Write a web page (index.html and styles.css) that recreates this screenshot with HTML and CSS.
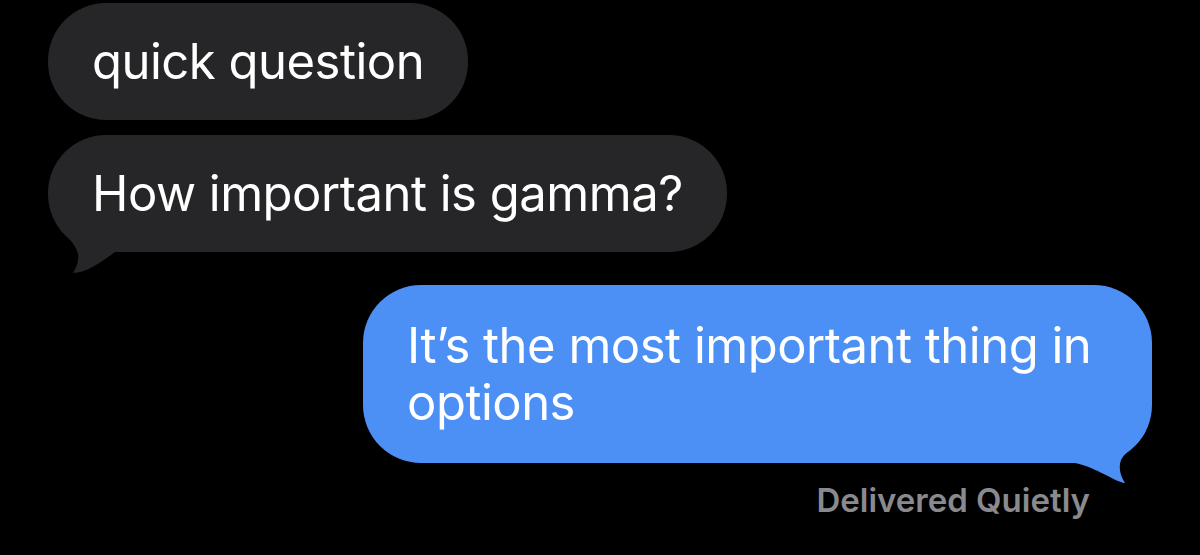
FILE: index.html
```html
<!DOCTYPE html>
<html lang="en">
<head>
  <meta charset="UTF-8">
  <title>Messages</title>
  <meta name="viewport" content="width=device-width, initial-scale=1.0">
  <link rel="stylesheet" href="styles.css">
</head>
<body>

<div class="thread">
  <div class="msg msg-in">
    <div class="bubble bubble-in">quick question</div>
  </div>

  <div class="msg msg-in">
    <div class="bubble bubble-in">
      How important is gamma?
      <svg class="tail tail-in" width="80" height="46" viewBox="0 0 80 46">
        <path d="M12 0 C18 6 28 14 30 24 C31 32 28 38 25 43 C38 43 52 33 67 22 L67 0 Z"/>
      </svg>
    </div>
  </div>

  <div class="msg msg-out">
    <div class="bubble bubble-out">
      It’s the most important thing in options
      <svg class="tail tail-out" width="90" height="56" viewBox="0 0 90 56">
        <path d="M76 0 C72 12 56 20 51 30 C48 38 51 47 55 53 C45 52 28 38 5 33 L5 0 Z"/>
      </svg>
    </div>
  </div>

  <div class="status">Delivered Quietly</div>
</div>

</body>
</html>
```

FILE: styles.css
```css
body {
  margin: 0;
  background: #000;
  font-family: Inter, "Noto Sans", sans-serif;
  color: #fff;
}
.thread {
  display: flex;
  flex-direction: column;
  padding: 3px 48px 0 48px;
}
.msg {
  display: flex;
}
.msg-in {
  justify-content: flex-start;
}
.msg-in + .msg-in {
  margin-top: 15px;
}
.msg-out {
  justify-content: flex-end;
  margin-top: 33px;
}
.bubble {
  position: relative;
  font-size: 49px;
  line-height: 57px;
  letter-spacing: -0.5px;
  padding: 30px 44px;
  border-radius: 58px;
}
.bubble-in {
  background: #262628;
}
.bubble-out {
  background: #4c8ff5;
  max-width: 701px;
  padding-top: 32px;
  padding-bottom: 32px;
}
.tail {
  position: absolute;
}
.tail-in {
  left: 0;
  bottom: -24px;
  fill: #262628;
}
.tail-out {
  right: -8px;
  bottom: -23px;
  fill: #4c8ff5;
}
.status {
  align-self: flex-end;
  margin-top: 17px;
  margin-right: 62px;
  font-size: 33px;
  line-height: 40px;
  font-weight: 600;
  color: #8a8a8e;
}
```
